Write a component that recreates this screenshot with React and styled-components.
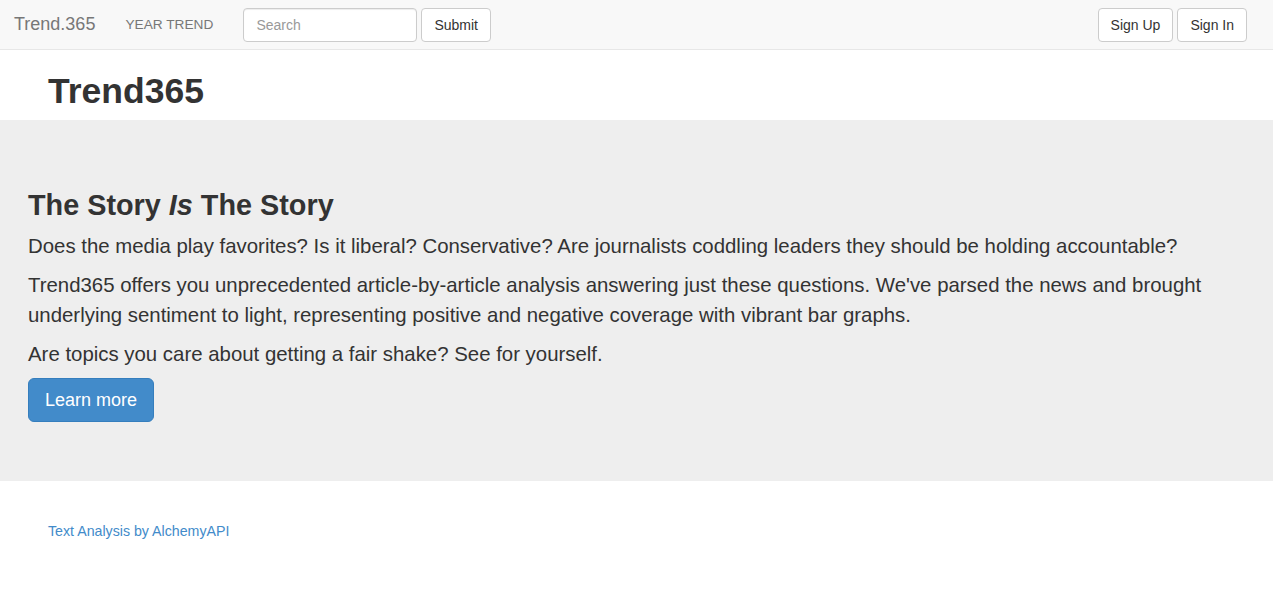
import React from 'react';
import styled, { createGlobalStyle } from 'styled-components';

const GlobalStyle = createGlobalStyle`
  body {
    margin: 0;
    font-family: 'Liberation Sans', Arial, sans-serif;
    font-size: 14px;
    color: #333;
    background: #fff;
  }
`;

const Navbar = styled.nav`
  height: 50px;
  box-sizing: border-box;
  background: #f8f8f8;
  border-bottom: 1px solid #e7e7e7;
  display: flex;
  align-items: center;
  padding: 0 26px 0 14px;
`;
const Brand = styled.a`
  font-size: 18px;
  color: #777;
  text-decoration: none;
  margin-right: 30px;
`;
const NavLink = styled.a`
  font-size: 13.7px;
  color: #777;
  text-decoration: none;
  text-transform: uppercase;
  margin-right: 30px;
`;
const SearchForm = styled.form`
  display: flex;
  gap: 4px;
  margin: 0;
`;
const Input = styled.input`
  width: 174px;
  height: 34px;
  box-sizing: border-box;
  padding: 6px 12px;
  font: 14px 'Liberation Sans', Arial, sans-serif;
  color: #555;
  border: 1px solid #ccc;
  border-radius: 4px;
  box-shadow: inset 0 1px 1px rgba(0, 0, 0, 0.075);
  &::placeholder {
    color: #999;
  }
`;
const Button = styled.button`
  height: 34px;
  box-sizing: border-box;
  padding: 6px 12px;
  font: 14px 'Liberation Sans', Arial, sans-serif;
  color: #333;
  background: #fff;
  border: 1px solid #ccc;
  border-radius: 4px;
`;
const Right = styled.div`
  margin-left: auto;
  display: flex;
  gap: 4px;
`;

const Header = styled.h1`
  font-size: 35.5px;
  font-weight: bold;
  line-height: 40px;
  margin: 21px 0 9px 48px;
  color: #333;
`;

const Jumbotron = styled.section`
  background: #eee;
  padding: 48px 28px 49px;
`;
const Title = styled.h2`
  font-size: 28.8px;
  font-weight: bold;
  line-height: 33px;
  margin: 21px 0 10px;
`;
const Lead = styled.p`
  font-size: 20.4px;
  line-height: 29.4px;
  margin: 0 0 10px;
`;
const Actions = styled.div`
  display: flex;
  margin: -2px 0 10px;
`;
const PrimaryButton = styled.a`
  display: block;
  box-sizing: border-box;
  height: 44px;
  line-height: 42px;
  padding: 0 16px;
  font-size: 18px;
  color: #fff;
  background: #428bca;
  border: 1px solid #357ebd;
  border-radius: 6px;
  text-decoration: none;
`;

const Footer = styled.footer`
  padding: 42px 48px;
`;
const FooterLink = styled.a`
  font-size: 14.2px;
  color: #428bca;
  text-decoration: none;
`;

export default function App() {
  return (
    <>
      <GlobalStyle />
      <Navbar>
        <Brand href="#">Trend.365</Brand>
        <NavLink href="#">Year Trend</NavLink>
        <SearchForm onSubmit={(e) => e.preventDefault()}>
          <Input placeholder="Search" />
          <Button type="submit">Submit</Button>
        </SearchForm>
        <Right>
          <Button>Sign Up</Button>
          <Button>Sign In</Button>
        </Right>
      </Navbar>
      <Header>Trend365</Header>
      <Jumbotron>
        <Title>
          The Story <em>Is</em> The Story
        </Title>
        <Lead>
          Does the media play favorites? Is it liberal? Conservative? Are journalists coddling leaders they should be holding accountable?
        </Lead>
        <Lead>
          Trend365 offers you unprecedented article-by-article analysis answering just these questions. We've parsed the news and brought underlying sentiment to light, representing positive and negative coverage with vibrant bar graphs.
        </Lead>
        <Lead>Are topics you care about getting a fair shake? See for yourself.</Lead>
        <Actions>
          <PrimaryButton href="#">Learn more</PrimaryButton>
        </Actions>
      </Jumbotron>
      <Footer>
        <FooterLink href="#">Text Analysis by AlchemyAPI</FooterLink>
      </Footer>
    </>
  );
}
